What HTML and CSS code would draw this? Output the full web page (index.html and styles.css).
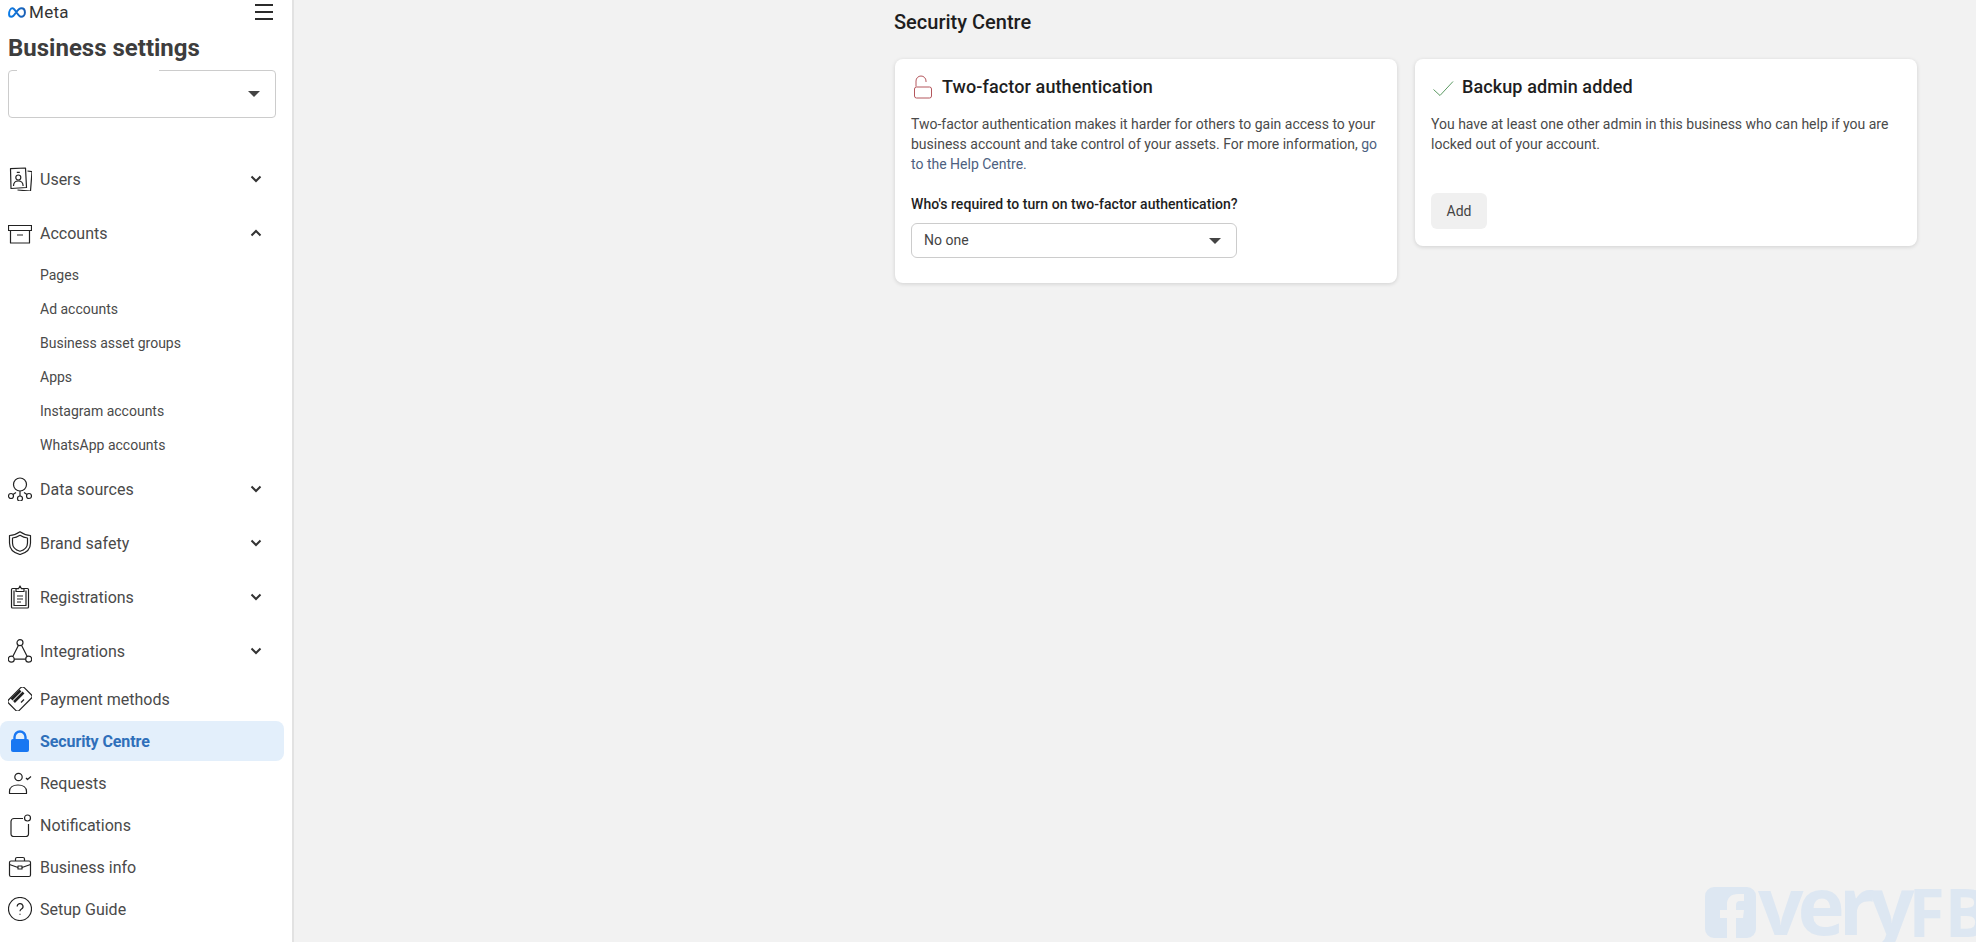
FILE: index.html
```html
<!DOCTYPE html>
<html lang="en">
<head>
<meta charset="utf-8">
<title>Business settings</title>
<link rel="stylesheet" href="styles.css">
</head>
<body>
<div class="app">
  <aside class="sidebar">
    <div class="brand-row">
      <div class="brand">
        <svg class="meta-logo" viewBox="0 0 20 12"><defs><linearGradient id="mg" x1="0" x2="1"><stop offset="0" stop-color="#0a7be8"/><stop offset="1" stop-color="#1a5fb4"/></linearGradient></defs><path d="M1.200 8c0-4 1.800-6.700 3.800-6.700 3 0 6 9.500 9.500 9.500 2.500 0 4.300-2.200 4.300-4.800 0-3-1.600-4.700-3.800-4.700-2.500 0-5 3-6.500 5.300C6.700 9.500 5.500 10.800 3.700 10.800 2.200 10.800 1.200 9.800 1.200 8z" fill="none" stroke="url(#mg)" stroke-width="2.200"/></svg>
        <span class="meta-word">Meta</span>
      </div>
      <svg class="burger" viewBox="0 0 18 16"><path d="M0 1h18M0 8h18M0 15h18" stroke="#2b2b2b" stroke-width="2"/></svg>
    </div>
    <h1 class="app-title">Business settings</h1>
    <div class="biz-select">
      <span class="biz-mask"></span>
      <span class="caret"></span>
    </div>
    <nav class="nav">
      <div class="row tall">
        <svg class="ico" viewBox="0 0 24 24"><g class="ln"><path d="M2.500 1.700 17.500 1 18.500 20.500 3 21.500Z"/><path d="M19.500 4 24 4.700 22.500 24 9.500 23"/><circle cx="10.300" cy="10.500" r="2.500"/><path d="M5.500 19c0-3.500 2.300-5 4.800-5s4.800 1.500 4.800 5M8.800 5.300h3"/></g></svg>
        <span class="label">Users</span>
        <svg class="chev" viewBox="0 0 12 8"><path d="M1.500 1.500 6 6l4.500-4.500"/></svg>
      </div>
      <div class="row tall">
        <svg class="ico" viewBox="0 0 24 24"><g class="ln"><rect x=".5" y="4.500" width="23" height="5"/><path d="M2.500 9.500V22h19V9.500M9 14h6"/></g></svg>
        <span class="label">Accounts</span>
        <svg class="chev" viewBox="0 0 12 8"><path d="M1.500 6.500 6 2l4.500 4.500"/></svg>
      </div>
      <div class="subs">
        <a class="sub">Pages</a>
        <a class="sub">Ad accounts</a>
        <a class="sub">Business asset groups</a>
        <a class="sub">Apps</a>
        <a class="sub">Instagram accounts</a>
        <a class="sub">WhatsApp accounts</a>
      </div>
      <div class="row tall">
        <svg class="ico" viewBox="0 0 24 24"><g class="ln"><circle cx="12" cy="7.500" r="6.500"/><circle cx="3" cy="19" r="2.500"/><circle cx="12" cy="21.500" r="2.500"/><circle cx="21" cy="19" r="2.500"/><path d="M12 14v5M5 17.500 8 15.500M19 17.500 16 15.500"/></g></svg>
        <span class="label">Data sources</span>
        <svg class="chev" viewBox="0 0 12 8"><path d="M1.500 1.500 6 6l4.500-4.500"/></svg>
      </div>
      <div class="row tall">
        <svg class="ico" viewBox="0 0 24 24"><g class="ln"><path d="M12 .8C15 3 18.500 4.300 22.500 4.500V12c0 6-4.500 10-10.500 11.500C6 22 1.500 18 1.500 12V4.500C5.500 4.300 9 3 12 .8Z"/><path d="M12 4.300C14.300 5.800 16.700 6.800 19.500 7v5c0 4.300-3.200 7-7.500 8.300C7.700 19 4.500 16.300 4.500 12V7C7.300 6.800 9.700 5.800 12 4.300Z"/></g></svg>
        <span class="label">Brand safety</span>
        <svg class="chev" viewBox="0 0 12 8"><path d="M1.500 1.500 6 6l4.500-4.500"/></svg>
      </div>
      <div class="row tall">
        <svg class="ico" viewBox="0 0 24 24"><g class="ln"><path d="M8 3.500H4.500a1 1 0 0 0-1 1V22a1 1 0 0 0 1 1h15a1 1 0 0 0 1-1V4.500a1 1 0 0 0-1-1H16"/><path d="M8 6.500V3.700h2.500L12 1l1.500 2.700H16v2.800z"/><path d="M6 5.500V20.500H18V5.500M9 11h6M9 14h6M9 17h4"/></g></svg>
        <span class="label">Registrations</span>
        <svg class="chev" viewBox="0 0 12 8"><path d="M1.500 1.500 6 6l4.500-4.500"/></svg>
      </div>
      <div class="row tall">
        <svg class="ico" viewBox="0 0 24 24"><g class="ln"><circle cx="12" cy="3.700" r="3"/><circle cx="3.300" cy="20.200" r="3"/><circle cx="20.700" cy="20.200" r="3"/><path d="M10.500 6.300 4.800 17.500M13.500 6.300l5.700 11.200M6.300 20.200h11.400"/></g></svg>
        <span class="label">Integrations</span>
        <svg class="chev" viewBox="0 0 12 8"><path d="M1.500 1.500 6 6l4.500-4.500"/></svg>
      </div>
      <div class="row first">
        <svg class="ico" viewBox="0 0 24 24"><g class="ln"><rect x="1" y="4.500" width="22" height="15" rx="2.500" transform="rotate(-45 12 12)"/><path d="M3.500 12.500 12.500 3.500M6 15 15.500 5.500" class="ln-thick"/><path d="M13 15.500l3-3"/></g></svg>
        <span class="label">Payment methods</span>
      </div>
      <div class="row active">
        <svg class="ico" viewBox="0 0 24 24"><path d="M6.500 11V8a5.500 5.500 0 0 1 11 0v3" fill="none" stroke="#1877f2" stroke-width="2.400"/><rect x="3" y="10" width="18" height="13" rx="2" fill="#1877f2"/></svg>
        <span class="label">Security Centre</span>
      </div>
      <div class="row">
        <svg class="ico" viewBox="0 0 24 24"><g class="ln"><circle cx="10.500" cy="6" r="3.700"/><path d="M1.500 22.500v-2c0-4 3.500-6.500 8.500-6.500s8.500 2.500 8.500 6.500v2z"/><path d="M18 7l1.500 1.500L23 5.500"/></g></svg>
        <span class="label">Requests</span>
      </div>
      <div class="row">
        <svg class="ico" viewBox="0 0 24 24"><g class="ln"><path d="M15 5.500H6a3 3 0 0 0-3 3V21a2.500 2.500 0 0 0 2.500 2.500H18a2.500 2.500 0 0 0 2.500-2.500V11"/><circle cx="19.500" cy="5" r="3"/></g></svg>
        <span class="label">Notifications</span>
      </div>
      <div class="row">
        <svg class="ico" viewBox="0 0 24 24"><g class="ln"><rect x="1.500" y="6" width="21" height="15.500" rx="1.500"/><path d="M7.500 6V4a1.500 1.500 0 0 1 1.500-1.500h6A1.500 1.500 0 0 1 16.500 4v2M1.500 9.500l8.500 3M22.500 9.500l-8.500 3"/><rect x="10" y="11" width="4" height="3"/></g></svg>
        <span class="label">Business info</span>
      </div>
      <div class="row">
        <svg class="ico" viewBox="0 0 24 24"><g class="ln"><circle cx="12" cy="12" r="11.500"/><path d="M9.200 9.500A2.900 2.900 0 1 1 13.500 12c-1 .6-1.500 1.200-1.500 2.300"/><path d="M12 16.800v1"/></g></svg>
        <span class="label">Setup Guide</span>
      </div>
    </nav>
  </aside>
  <main class="main">
    <h2 class="page-title">Security Centre</h2>
    <div class="cards">
      <section class="card">
        <div class="card-head">
          <svg class="card-ico" viewBox="0 0 24 24"><g class="ln-red"><path d="M5 11.500V6a5 5 0 0 1 10 0v1"/><rect x="3.500" y="12" width="17" height="11" rx="2"/></g></svg>
          <h3 class="card-title">Two-factor authentication</h3>
        </div>
        <p class="card-text">Two-factor authentication makes it harder for others to gain access to your business account and take control of your assets. For more information, <a class="link">go to the Help Centre.</a></p>
        <div class="field-label">Who's required to turn on two-factor authentication?</div>
        <div class="select"><span class="select-value">No one</span><span class="caret"></span></div>
      </section>
      <section class="card">
        <div class="card-head">
          <svg class="card-ico" viewBox="0 0 24 24"><path d="M2.500 14.500 9 20.500 22 6.500" fill="none" stroke="#5c9a63" stroke-width="1"/></svg>
          <h3 class="card-title">Backup admin added</h3>
        </div>
        <p class="card-text">You have at least one other admin in this business who can help if you are locked out of your account.</p>
        <button class="btn">Add</button>
      </section>
    </div>
  </main>
</div>
<div class="watermark">
  <svg class="wm-logo" viewBox="0 0 51 51"><path fill-rule="evenodd" d="M9 0h33a9 9 0 0 1 9 9v33a9 9 0 0 1-9 9H31V31h7l1-8h-8v-5c0-2 1-4 4-4h4V7h-6c-7 0-11 4-11 10v6h-7v8h7v20H9a9 9 0 0 1-9-9V9a9 9 0 0 1 9-9z" fill="#dde7f2"/></svg>
  <span class="wm-small">very</span><span class="wm-caps">FB</span>
</div>
</body>
</html>
```
FILE: styles.css
```css
* { box-sizing: border-box; }
html, body { margin: 0; height: 100%; overflow: hidden; }
body { font-family: Roboto, "Liberation Sans", sans-serif; background: #f2f2f2; color: #444; }
.app { display: flex; height: 942px; }

.sidebar { width: 294px; flex: none; background: #fff; border-right: 2px solid #e2e2e2; padding-right: 8px; }
.brand-row { display: flex; justify-content: space-between; align-items: center; height: 24px; padding-left: 8px; padding-right: 11px; }
.brand { display: flex; align-items: center; gap: 3px; }
.meta-logo { width: 18px; height: 11px; }
.meta-word { font-size: 17px; font-weight: 400; color: #333; letter-spacing: .3px; }
.burger { width: 18px; height: 16px; }
.app-title { margin: 10px 0 0 8px; font-size: 24px; line-height: 28px; font-weight: 700; color: #3d3d3d; height: 36px; }
.biz-select { position: relative; display: flex; align-items: center; justify-content: flex-end; margin-left: 8px; width: 268px; height: 48px; border: 1px solid #ccc; border-radius: 4px; padding-right: 15px; }
.biz-mask { position: absolute; left: 8px; top: -1px; width: 142px; height: 2px; background: #fff; }
.caret { width: 0; height: 0; border-left: 6px solid transparent; border-right: 6px solid transparent; border-top: 6px solid #444; }

.nav { margin-top: 34px; }
.row { display: flex; align-items: center; height: 40px; margin-top: 2px; padding-left: 8px; padding-right: 22px; gap: 8px; border-radius: 8px; }
.row.tall { height: 54px; margin-top: 0; }
.row.first { margin-top: 1px; }
.row.active { background: #e3effb; }
.row.active .label { color: #2f6fba; font-weight: 700; letter-spacing: -.1px; }
.ico { width: 24px; height: 24px; flex: none; }
.ln { fill: none; stroke: #222; stroke-width: 1.200; stroke-linejoin: round; }
.ln-thick { stroke-width: 2.600; }
.label { flex: 1; font-size: 16px; color: #4a4a4a; }
.chev { width: 12px; height: 8px; fill: none; stroke: #333; stroke-width: 2; }
.subs { margin-top: -2px; display: flex; flex-direction: column; }
.sub { display: flex; align-items: center; height: 34px; padding-left: 40px; font-size: 14px; color: #4a4a4a; }

.main { flex: 1; padding: 10px 0 0 600px; }
.page-title { margin: 0; font-size: 20px; line-height: 24px; font-weight: 500; color: #1e1e1e; }
.cards { display: flex; align-items: flex-start; gap: 18px; margin: 25px 0 0 1px; }
.card { width: 502px; background: #fff; border-radius: 8px; box-shadow: 0 1px 4px rgba(0,0,0,.14); padding: 16px; }
.card-head { display: flex; align-items: center; gap: 7px; height: 24px; }
.card-ico { width: 24px; height: 24px; flex: none; }
.ln-red { fill: none; stroke: #b4565c; stroke-width: 1; }
.card-title { margin: 0 0 2px; font-size: 18px; font-weight: 500; color: #1e1e1e; letter-spacing: .1px; }
.card-text { margin: 15px 0 0; font-size: 14px; line-height: 20px; color: #4a4a4a; }
.link { color: #4d5f80; }
.field-label { margin-top: 20px; font-size: 14px; line-height: 20px; font-weight: 500; color: #1e1e1e; letter-spacing: .05px; }
.select { display: flex; align-items: center; justify-content: space-between; width: 326px; height: 35px; margin: 9px 0; padding: 0 15px 0 12px; border: 1px solid #ccc; border-radius: 6px; font-size: 14px; color: #444; }
.select-value { margin-bottom: 2px; }
.btn { display: block; margin: 39px 0 1px; width: 56px; height: 36px; border: 0; border-radius: 6px; background: #f0f0f0; font: 14px Roboto, sans-serif; color: #444; }

.watermark { position: absolute; left: 1705px; top: 887px; display: flex; align-items: flex-start; white-space: nowrap; font-family: "Open Sans", sans-serif; font-weight: 700; color: #dde7f2; }
.wm-logo { width: 51px; height: 51px; flex: none; margin-right: 2px; }
.wm-small { font-size: 80px; line-height: 34px; letter-spacing: -6px; }
.wm-caps { font-size: 66px; line-height: 49px; }
```
